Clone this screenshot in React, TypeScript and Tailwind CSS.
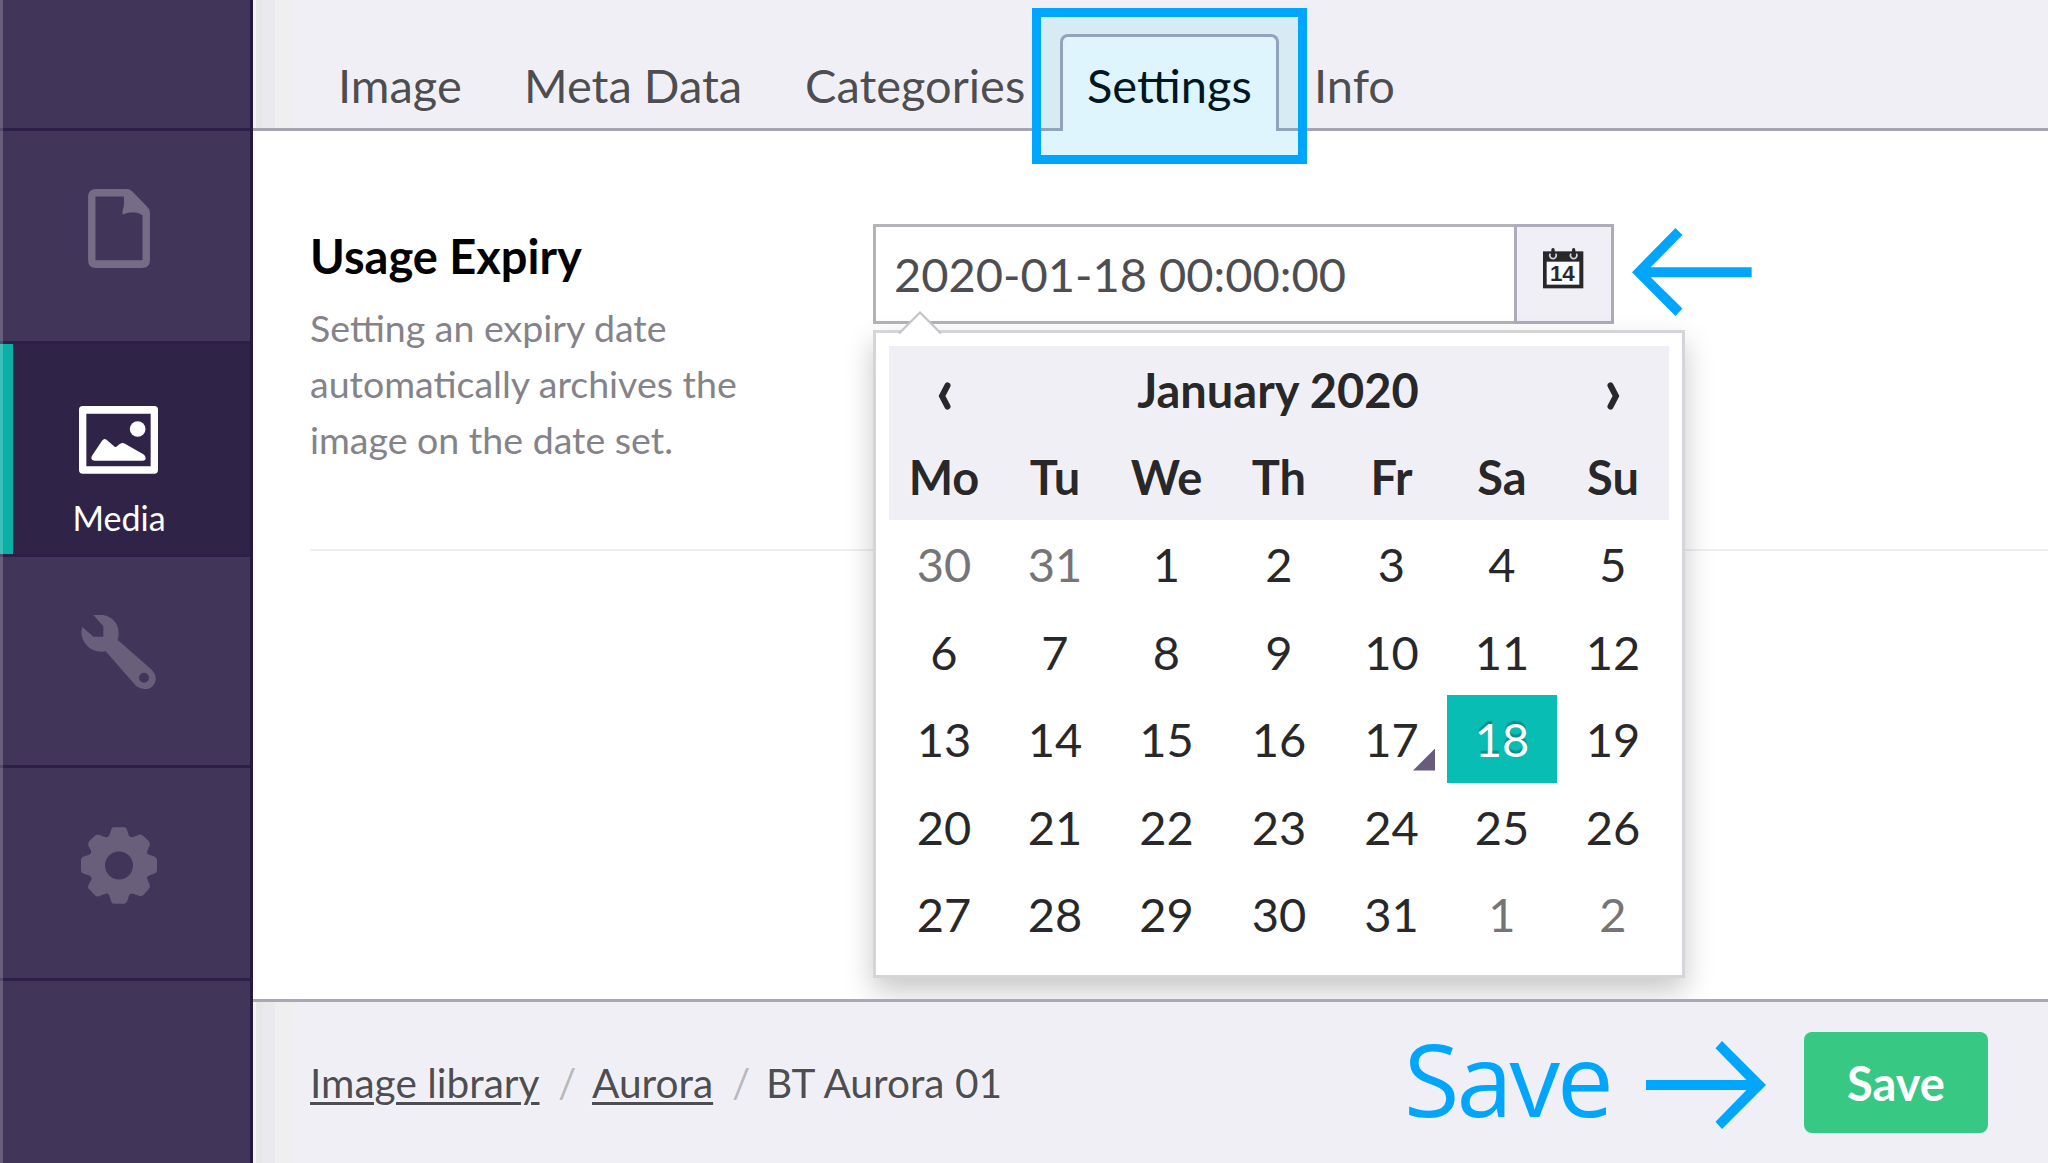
import type { ReactNode } from "react";

const DAYS = ["Mo", "Tu", "We", "Th", "Fr", "Sa", "Su"];
const WEEKS = [
  [30, 31, 1, 2, 3, 4, 5],
  [6, 7, 8, 9, 10, 11, 12],
  [13, 14, 15, 16, 17, 18, 19],
  [20, 21, 22, 23, 24, 25, 26],
  [27, 28, 29, 30, 31, 1, 2],
];

const GRID = "grid grid-cols-[110px_112px_111px_114px_111px_110px_112px]";
const HALO = "[text-shadow:0_0_2px_#ffffff]";

function NavItem({ children, active = false, className = "" }: { children?: ReactNode; active?: boolean; className?: string }) {
  return (
    <div
      className={`relative flex shrink-0 flex-col items-center border-t-[3px] border-[#2d1f47] pr-[13px] ${
        active ? "bg-[#2f2447]" : "bg-[#413659]"
      } ${className}`}
    >
      {active && <span className="absolute top-0 left-0 h-[210px] w-[13px] bg-[#0ab0a6]" />}
      {children}
    </div>
  );
}

function Sidebar() {
  return (
    <aside className="relative flex h-full w-[253px] shrink-0 flex-col border-r-[3px] border-[#27193f] bg-[#413659]">
      <div className="h-[128px] shrink-0" />
      <NavItem className="h-[213px] pt-[58px]">
        <svg width="62" height="79" viewBox="0 0 184 235" fill="#766c86">
          <path
            fillRule="evenodd"
            d="M24 0H115Q124 0 131 7L176 53Q184 61 184 72V211Q184 235 160 235H24Q0 235 0 211V24Q0 0 24 0ZM22 22V212H162V78Q140 62 103 76Q101 68 105 56Q109 42 106 22Z"
          />
        </svg>
      </NavItem>
      <NavItem active className="h-[213px] pt-[62px]">
        <svg width="79" height="68" viewBox="0 0 237 204" fill="#fff">
          <path fillRule="evenodd" d="M11 0H226Q237 0 237 11V192Q237 203 226 203H11Q0 203 0 192V11Q0 0 11 0ZM22 23V181H215V23Z" />
          <circle cx="176" cy="69" r="23.5" />
          <path d="M39 149L69 104Q77 94 86 104L107 122Q110 125 114 121L122 114Q130 108 138 113L193 145Q200 149 200 157Q200 164 191 164H46Q38 164 37 157Q37 153 39 149Z" />
        </svg>
        <div className="mt-[19px] ml-[1px] text-[34px] leading-[50px] text-white">Media</div>
      </NavItem>
      <NavItem className="h-[211px] pt-[58px]">
        <svg width="75" height="75" viewBox="0 0 225 225" fill="#695f7b">
          <path
            fillRule="evenodd"
            d="M37 0Q60 -4 80 4Q112 18 113 55Q113 66 110 75L209 161Q225 176 224 193Q222 212 206 220Q186 228 166 214L74 109Q40 114 20 94Q-6 68 4 36L37 65H67V34ZM189 173A15 15 0 1 0 189 203A15 15 0 1 0 189 173Z"
          />
        </svg>
      </NavItem>
      <NavItem className="h-[213px] pt-[59px]">
        <svg width="76" height="77" viewBox="0 0 228 230" fill="#695f7b">
          <path
            fillRule="evenodd"
            d="M99 0H129Q136 0 139 10L143 24Q146 31 154 30L174 23Q181 20 188 27L202 41Q209 48 206 55L199 71Q196 79 204 83L219 87Q228 91 228 99V130Q228 137 219 140L204 145Q196 149 199 157L206 173Q209 180 202 187L188 203Q182 209 174 206L156 200Q148 196 144 205L139 221Q136 230 129 230H99Q92 230 90 221L85 205Q81 196 73 200L54 207Q47 210 40 203L26 188Q19 181 22 174L31 158Q33 149 25 145L9 140Q0 137 0 130V99Q0 91 9 88L24 83Q33 79 30 71L22 55Q19 48 26 41L40 27Q47 20 54 23L74 30Q82 31 85 24L90 10Q92 0 99 0ZM114 73A42 42 0 1 0 114 157A42 42 0 1 0 114 73Z"
          />
        </svg>
      </NavItem>
      <NavItem className="grow" />
      <span className="absolute top-0 left-0 h-full w-[3px] bg-white/20" />
    </aside>
  );
}

function EdgeShade() {
  return (
    <span className="absolute top-0 left-0 h-full w-[41px] bg-[linear-gradient(to_right,#f3f3f5_0_3px,#e7e7e8_3px_10px,#eae9ed_10px_22px,#efeff0_22px_41px)]" />
  );
}

function Tabs() {
  const tab = `flex h-[88px] items-center pt-[3px] text-[47px] leading-none text-[#4e4e52] ${HALO}`;
  return (
    <header className="relative flex h-[131px] shrink-0 items-end border-b-[3px] border-[#a6a3b5] bg-[#f0eff5] pl-[85px]">
      <EdgeShade />
      <div className="absolute top-[17px] left-[788px] h-[111px] w-[257px] bg-[#f7f4f4]" />
      <div className={`${tab} w-[186px]`}>Image</div>
      <div className={`${tab} w-[280px]`}>Meta Data</div>
      <div className={`${tab} w-[256px] pl-px`}>Categories</div>
      <div className="relative z-10 -mb-[3px] flex h-[97px] w-[219px] items-center rounded-t-lg border-[3px] border-b-0 border-[#a6a3b5] bg-white pt-[3px] pl-[24px] text-[47px] leading-none text-black">
        Settings
      </div>
      <div className={`${tab} pl-[35px]`}>Info</div>
      <div className="absolute top-2 left-[779px] z-20 h-[156px] w-[275px] border-[9px] border-[#00a5fc] bg-[#00b4f5]/[0.13]" />
    </header>
  );
}

function CalendarIcon() {
  return (
    <svg width="42" height="42" viewBox="0 0 126 126" className="mr-[2px] mb-[10px]">
      <rect x="3" y="10" width="121" height="111" fill="#28282b" />
      <rect x="14" y="41" width="98" height="69" fill="#fafafc" />
      {[33, 95].map((x) => (
        <g key={x}>
          <path d={`M${x - 8} 17A9.500 9.500 0 1 0 ${x + 8} 17`} fill="none" stroke="#d8d8dc" strokeWidth="5" />
          <rect x={x - 5} y="0" width="10" height="27" rx="5" fill="#28282b" />
        </g>
      ))}
      <text x="61" y="99" textAnchor="middle" fontFamily="Liberation Sans, Arial, sans-serif" fontWeight="700" fontSize="67" fill="#28282b">
        14
      </text>
    </svg>
  );
}

function Chevron({ flip = false }: { flip?: boolean }) {
  return (
    <svg width="13" height="28" viewBox="0 0 13 28" className={`mx-auto mt-[12px] ${flip ? "-scale-x-100" : ""}`}>
      <path d="M9.500 3.500L4 14L9.500 24.500" fill="none" stroke="#28282b" strokeWidth="6" strokeLinecap="round" />
    </svg>
  );
}

function DatePicker() {
  return (
    <div className="absolute top-[106px] left-0 h-[648px] w-[812px] border-[3px] border-[#d5d4d9] bg-white px-[13px] pt-[13px] text-[47px] leading-none text-[#28282b] shadow-[0_13px_27px_rgba(0,0,0,0.22)]">
      <svg className="absolute -top-[22px] left-[22px]" width="46" height="24" viewBox="0 0 46 24">
        <path d="M0 24L22 1.500L44 24Z" fill="#fff" />
        <path d="M1 22.500L22 1.500L43 22.500" fill="none" stroke="#c4c4c8" strokeWidth="2.200" />
      </svg>
      <div className={`h-[174px] bg-[#f0eff5] font-bold ${HALO}`}>
        <div className="grid h-[87px] grid-cols-[110px_558px_112px] items-center text-center">
          <Chevron />
          <span className="pt-[2px]">January 2020</span>
          <Chevron flip />
        </div>
        <div className={`${GRID} h-[88px] items-center text-center`}>
          {DAYS.map((d) => (
            <span key={d} className="pt-px">
              {d}
            </span>
          ))}
        </div>
      </div>
      {WEEKS.map((week, w) => (
        <div key={w} className={`${GRID} h-[87.5px]`}>
          {week.map((day, i) => {
            const outside = (w === 0 && day > 7) || (w === 4 && day < 7);
            const selected = day === 18;
            return (
              <span
                key={i}
                className={`relative flex items-center justify-center pt-[2px] ${
                  selected
                    ? "bg-[#08beb4] text-white [text-shadow:0_-3px_1px_rgba(0,0,0,0.25)]"
                    : outside
                      ? "text-[#757578]"
                      : "text-[#28282b]"
                }`}
              >
                {day}
                {day === 17 && (
                  <i className="absolute right-3 bottom-[12px] h-[22px] w-[22px] bg-[#685c7c] [clip-path:polygon(100%_0,100%_100%,0_100%)]" />
                )}
              </span>
            );
          })}
        </div>
      ))}
    </div>
  );
}

function Content() {
  return (
    <section className="relative h-[868px] shrink-0 bg-white pl-[57px]">
      <div className="flex h-[420px] border-b-[2px] border-[#efeff3]">
        <div className="w-[563px] shrink-0 pt-[95px]">
          <h2 className="text-[47px] leading-[60px] font-bold text-black">Usage Expiry</h2>
          <p className="mt-[14px] w-[450px] text-[37.500px] leading-[56px] text-[#848389]">
            Setting an expiry date automatically archives the image on the date set.
          </p>
        </div>
        <div className="relative mt-[93px] flex h-[100px]">
          <div className="flex w-[641px] items-center border-[3px] border-r-0 border-[#b4b3b8] bg-white pt-px pl-[18px] text-[47px] leading-none text-[#4e4e52]">
            2020-01-18 00:00:00
          </div>
          <div className="flex w-[100px] items-center justify-center border-[3px] border-[#aeabbb] bg-[#f0eff5]">
            <CalendarIcon />
          </div>
          <svg className="mt-1 ml-[18px]" width="120" height="88" viewBox="0 0 359 263" fill="#00a5fc">
            <path d="M0 132L130 0L151 21L56 117H358V147H56L151 241L130 263Z" />
          </svg>
          <DatePicker />
        </div>
      </div>
    </section>
  );
}

function Footer() {
  return (
    <footer className="relative z-10 flex grow items-center border-t-[3px] border-[#aaa7b7] bg-[#f0eff5] pl-[57px]">
      <EdgeShade />
      <nav className={`relative flex w-[1094px] shrink-0 items-center pt-[2px] text-[40.600px] leading-none text-[#4e4e52] ${HALO}`}>
        <a className="w-[248px] underline decoration-[3px] underline-offset-[4px]">Image library</a>
        <span className="w-[34px] text-[#b9b8be]">/</span>
        <a className="w-[140px] underline decoration-[3px] underline-offset-[4px]">Aurora</a>
        <span className="w-[34px] text-[#b9b8be]">/</span>
        <span>BT Aurora 01</span>
      </nav>
      <span className="mb-[8px] w-[242px] shrink-0 font-['Open_Sans',sans-serif] text-[101px] leading-none tracking-[-3px] text-[#00a5fc]">
        Save
      </span>
      <svg className="mt-1 shrink-0" width="120" height="88" viewBox="0 0 120 88" fill="#00a5fc">
        <path d="M120 44L76 0L69.500 7.300L100.500 39H0V49H100.500L69.500 80.700L76 88Z" />
      </svg>
      <button className="ml-[38px] h-[101px] w-[184px] shrink-0 rounded-[8px] bg-[#37c884] pt-[2px] text-[47px] leading-none font-bold text-white">
        Save
      </button>
    </footer>
  );
}

export default function App() {
  return (
    <div className="flex h-[1163px] w-[2048px] overflow-hidden bg-white font-[Lato,sans-serif]">
      <Sidebar />
      <main className="flex h-full grow flex-col">
        <Tabs />
        <Content />
        <Footer />
      </main>
    </div>
  );
}
